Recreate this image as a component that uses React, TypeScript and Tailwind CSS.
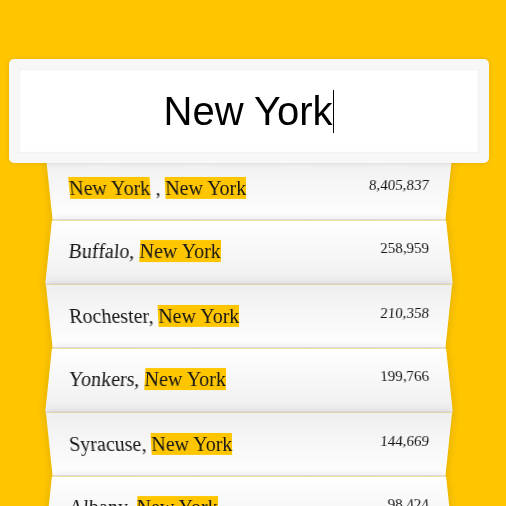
import React from 'react';

type Result = { city: string; population: string };

const results: Result[] = [
  { city: 'New York ', population: '8,405,837' },
  { city: 'Buffalo', population: '258,959' },
  { city: 'Rochester', population: '210,358' },
  { city: 'Yonkers', population: '199,766' },
  { city: 'Syracuse', population: '144,669' },
  { city: 'Albany', population: '98,424' },
  { city: 'New Rochelle', population: '79,446' },
];

const query = 'New York';

const Hl: React.FC<{ text: string }> = ({ text }) => {
  const parts = text.split(query);
  const out: React.ReactNode[] = [];
  parts.forEach((p, i) => {
    if (i > 0) {
      out.push(
        <span key={'h' + i} className="bg-[#ffc600]">
          {query}
        </span>
      );
    }
    if (p) out.push(<React.Fragment key={'t' + i}>{p}</React.Fragment>);
  });
  return <>{out}</>;
};

const App: React.FC = () => {
  return (
    <div className="h-[506px] overflow-hidden bg-[#ffc600] font-['Liberation_Serif',serif]">
      <div className="w-[498px] pt-[49px]">
        <form className="mx-auto max-w-[400px]">
          {/* search box, wider than the list */}
          <div className="relative z-10 -mx-10 mt-[10px] -mb-[9px] rounded-[5px] border-[10px] border-[#f7f7f7] bg-white p-5 shadow-[0_0_5px_rgba(0,0,0,0.12),inset_0_0_2px_rgba(0,0,0,0.19)]">
            <div className="flex items-center justify-center font-['Liberation_Sans',Arial,sans-serif] text-[40px] leading-[44px] text-black">
              <span>{query}</span>
              <span className="ml-px h-[43px] w-px bg-black" />
            </div>
          </div>

          <ul className="relative m-0 list-none p-0">
            {results.map((r, i) => (
              <li
                key={r.city}
                className={
                  'flex justify-between border-b border-[#d8d8d8] p-5 text-[20px] leading-[normal] capitalize text-[#161616] shadow-[0_0_10px_rgba(0,0,0,0.14)] ' +
                  (i % 2 === 0
                    ? '[transform:perspective(100px)_rotateX(-3deg)_translateY(3px)] bg-[linear-gradient(to_top,#ffffff_0%,#efefef_100%)]'
                    : '[transform:perspective(100px)_rotateX(3deg)_translateY(2px)_scale(1.001)] bg-[linear-gradient(to_bottom,#ffffff_0%,#efefef_100%)]')
                }
              >
                <span>
                  <Hl text={r.city} />, <Hl text={query} />
                </span>
                <span className="text-[15px]">{r.population}</span>
              </li>
            ))}
          </ul>
        </form>
      </div>
    </div>
  );
};

export default App;
